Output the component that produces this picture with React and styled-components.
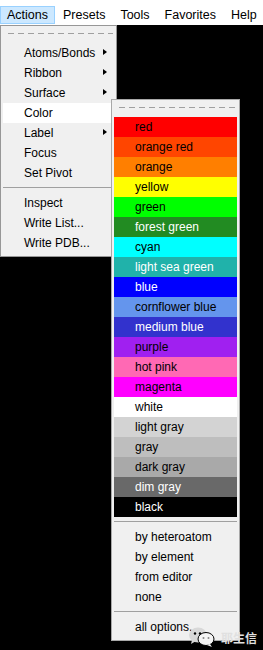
import React from 'react';
import styled, { createGlobalStyle } from 'styled-components';

const GlobalStyle = createGlobalStyle`
    body {
        margin: 0;
        background: #000;
        font-family: "Liberation Sans", Arial, sans-serif;
        font-size: 12px;
    }
`;

const topItems = ['Actions', 'Presets', 'Tools', 'Favorites', 'Help'];

const actionItems = [
    { label: 'Atoms/Bonds', sub: true },
    { label: 'Ribbon', sub: true },
    { label: 'Surface', sub: true },
    { label: 'Color', active: true },
    { label: 'Label', sub: true },
    { label: 'Focus' },
    { label: 'Set Pivot' },
    { sep: true },
    { label: 'Inspect' },
    { label: 'Write List...' },
    { label: 'Write PDB...' },
];

const colors = [
    ['red', '#ff0000', false],
    ['orange red', '#ff4500', false],
    ['orange', '#ff7f00', false],
    ['yellow', '#ffff00', false],
    ['green', '#00ff00', false],
    ['forest green', '#228b22', true],
    ['cyan', '#00ffff', false],
    ['light sea green', '#20b2aa', true],
    ['blue', '#0000ff', true],
    ['cornflower blue', '#6495ed', false],
    ['medium blue', '#3232cd', true],
    ['purple', '#a020f0', false],
    ['hot pink', '#ff69b4', false],
    ['magenta', '#ff00ff', false],
    ['white', '#ffffff', false],
    ['light gray', '#d3d3d3', false],
    ['gray', '#bebebe', false],
    ['dark gray', '#a9a9a9', false],
    ['dim gray', '#696969', true],
    ['black', '#000000', true],
];

const schemes = ['by heteroatom', 'by element', 'from editor', 'none'];

export default function App() {
    return (
        <>
            <GlobalStyle />
            <MenuBar>
                {topItems.map((t, i) => (
                    <TopItem key={t} open={i === 0}>{t}</TopItem>
                ))}
            </MenuBar>
            <Canvas>
                <ActionsMenu>
                    <TearOff />
                    {actionItems.map((it, i) =>
                        it.sep ? <Separator key={i} /> : (
                            <MenuItem key={it.label} active={it.active}>
                                {it.label}
                                {it.sub && <Arrow />}
                            </MenuItem>
                        )
                    )}
                </ActionsMenu>
                <ColorMenu>
                    <TearOff />
                    {colors.map(([name, bg, light]) => (
                        <Swatch key={name} bg={bg} light={light}>{name}</Swatch>
                    ))}
                    <Separator />
                    {schemes.map(s => <ColorItem key={s}>{s}</ColorItem>)}
                    <Separator />
                    <ColorItem>all options...</ColorItem>
                </ColorMenu>
                <Watermark>
                    <svg width="30" height="22" viewBox="0 0 30 22">
                        <ellipse cx="11" cy="9" rx="9" ry="7.5" fill="#d8d8d8" />
                        <path d="M5 14 L4 18 L9 15 Z" fill="#d8d8d8" />
                        <ellipse cx="19" cy="13" rx="8" ry="6.5" fill="#f4f4f4" stroke="#000" strokeWidth="1" />
                        <path d="M23 18 L25 21 L20 19 Z" fill="#f4f4f4" />
                        <circle cx="8" cy="7.5" r="1.2" fill="#000" />
                        <circle cx="13" cy="7.5" r="1.2" fill="#000" />
                        <circle cx="16.5" cy="12" r="1" fill="#888" />
                        <circle cx="21.5" cy="12" r="1" fill="#888" />
                    </svg>
                    <span>耶生信</span>
                </Watermark>
            </Canvas>
        </>
    );
}

const MenuBar = styled.div`
    display: flex;
    height: 25px;
    align-items: flex-end;
    background: #fff;
    padding-bottom: 1px;
    box-sizing: border-box;
`;

const TopItem = styled.div`
    height: 18px;
    line-height: 17px;
    padding: 0 6px;
    font-size: 12.5px;
    color: #000;
    box-sizing: border-box;
    border: 1px solid ${p => p.open ? '#99d1ff' : 'transparent'};
    background: ${p => p.open ? '#cce8ff' : 'transparent'};
    margin-right: 1px;
`;

const Canvas = styled.div`
    position: relative;
    height: 625px;
    background: #000;
`;

const ActionsMenu = styled.div`
    position: absolute;
    left: 0;
    top: 0;
    width: 117px;
    padding: 0 2px 3px 2px;
    box-sizing: border-box;
    background: #f0f0f0;
    border: 1px solid #979797;
`;

const TearOff = styled.div`
    height: 17px;
    margin: 0 1px;
    background-image: linear-gradient(to right, #a0a0a0 60%, transparent 60%);
    background-size: 10px 1px;
    background-repeat: repeat-x;
    background-position: 4px 7px;
`;

const MenuItem = styled.div`
    position: relative;
    height: 20px;
    line-height: 20px;
    padding-left: 21px;
    color: #000;
    background: ${p => p.active ? '#fff' : 'transparent'};
`;

const Arrow = styled.span`
    position: absolute;
    right: 7px;
    top: 6px;
    width: 0;
    height: 0;
    border-top: 3.5px solid transparent;
    border-bottom: 3.5px solid transparent;
    border-left: 4px solid #000;
`;

const Separator = styled.div`
    height: 1px;
    margin: 4px 0 5px;
    background: #a0a0a0;
`;

const ColorMenu = styled.div`
    position: absolute;
    left: 111px;
    top: 74px;
    width: 129px;
    padding: 0 2px 3px 2px;
    box-sizing: border-box;
    background: #f0f0f0;
    border: 1px solid #a8a8a8;
`;

const Swatch = styled.div`
    height: 20px;
    line-height: 20px;
    padding-left: 21px;
    background: ${p => p.bg};
    color: ${p => p.light ? '#fff' : '#000'};
`;

const ColorItem = styled.div`
    height: 20px;
    line-height: 20px;
    padding-left: 21px;
    color: #000;
`;

const Watermark = styled.div`
    position: absolute;
    right: 6px;
    bottom: 2px;
    display: flex;
    align-items: center;
    gap: 4px;
    color: #e0e0e0;
    font-family: "Noto Sans CJK SC", sans-serif;
    font-size: 12px;
    font-weight: bold;
`;
